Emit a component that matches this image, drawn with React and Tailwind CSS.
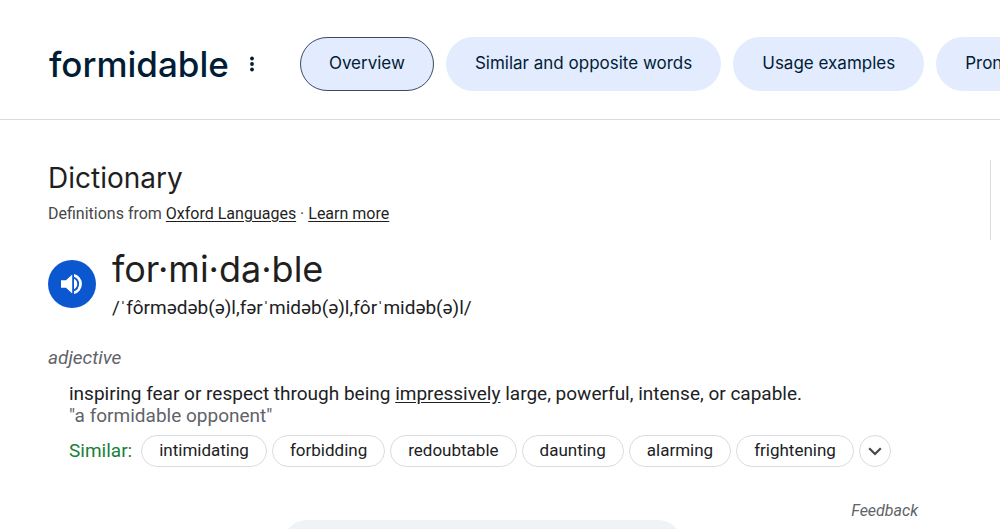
import React from "react";

const tabs = ["Overview", "Similar and opposite words", "Usage examples", "Pronunciation"];
const synonyms = ["intimidating", "forbidding", "redoubtable", "daunting", "alarming", "frightening"];

function MoreIcon() {
  return (
    <svg width="6" height="16" viewBox="0 0 6 16" fill="currentColor" aria-hidden="true">
      <circle cx="3" cy="2.5" r="1.9" />
      <circle cx="3" cy="8" r="1.9" />
      <circle cx="3" cy="13.5" r="1.9" />
    </svg>
  );
}

function SpeakerIcon() {
  return (
    <svg width="24" height="24" viewBox="0 0 24 24" fill="currentColor" aria-hidden="true">
      <path d="M1 8.2V15.8H6L12.2 21.5V2.5L6 8.2Z" />
      <path d="M14 6.8a5.8 5.8 0 0 1 0 10.4Z" />
      <path d="M14 1.9v2.8a7.8 7.8 0 0 1 0 14.6v2.8a10.4 10.4 0 0 0 0-20.2Z" />
    </svg>
  );
}

function ChevronIcon() {
  return (
    <svg width="14" height="9" viewBox="0 0 14 9" fill="none" stroke="currentColor" strokeWidth="2.2" aria-hidden="true">
      <path d="M1.2 1.2 7 7l5.8-5.8" />
    </svg>
  );
}

function Header() {
  return (
    <header className="flex items-center overflow-hidden border-b border-[#dadce0] pt-[37px] pb-7 pl-[49px] font-['Inter',sans-serif] text-[#001d35]">
      <h1 className="shrink-0 text-[35px] leading-10 font-medium">formidable</h1>
      <button type="button" aria-label="More options" className="mr-[45px] ml-5 shrink-0">
        <MoreIcon />
      </button>
      <nav aria-label="Dictionary sections" className="flex gap-3">
        {tabs.map((tab, i) => (
          <button
            key={tab}
            type="button"
            aria-current={i === 0 ? "page" : undefined}
            className={
              "h-[54px] shrink-0 rounded-full border bg-[#e3ebff] px-7 text-[17px] whitespace-nowrap " +
              (i === 0 ? "border-[#3c4a63]" : "border-transparent")
            }
          >
            {tab}
          </button>
        ))}
      </nav>
    </header>
  );
}

function Pronunciation() {
  return (
    <div className="mt-[18px] flex items-center gap-4">
      <button
        type="button"
        aria-label="Listen"
        className="mt-0.5 flex size-12 shrink-0 items-center justify-center rounded-full bg-[#0b57d0] text-white"
      >
        <SpeakerIcon />
      </button>
      <div>
        <h3 className="font-['Inter',sans-serif] text-4xl leading-[50px] text-[#1f1f1f]">for·mi·da·ble</h3>
        <p className="text-[19px] leading-7">/ˈfôrmədəb(ə)l,fərˈmidəb(ə)l,fôrˈmidəb(ə)l/</p>
      </div>
    </div>
  );
}

function Definition() {
  return (
    <div className="mt-[11px] pl-[21px]">
      <p className="text-[19px] leading-[22px]">
        inspiring fear or respect through being{" "}
        <a href="#impressively" className="underline underline-offset-2">impressively</a> large, powerful, intense, or capable.
      </p>
      <p className="text-[19px] leading-[22px] text-[#5f6368]">"a formidable opponent"</p>
      <div className="mt-2 flex items-center">
        <span className="mr-[9px] text-[19px] leading-7 text-[#188038]">Similar:</span>
        <ul className="flex gap-[5px]">
          {synonyms.map((word) => (
            <li key={word}>
              <button type="button" className="h-8 rounded-full border border-[#dadce0] px-[17px] text-[17px] whitespace-nowrap">
                {word}
              </button>
            </li>
          ))}
          <li>
            <button
              type="button"
              aria-label="More synonyms"
              className="flex size-8 items-center justify-center rounded-full border border-[#dadce0] text-[#474747]"
            >
              <ChevronIcon />
            </button>
          </li>
        </ul>
      </div>
    </div>
  );
}

export default function App() {
  return (
    <div className="h-screen overflow-hidden bg-white font-['Roboto',sans-serif] text-[#202124]">
      <Header />
      <main className="flex justify-between pr-[9px] pl-12">
        <article className="w-[870px]">
          <h2 className="pt-10 font-['Inter',sans-serif] text-[28px] leading-9 text-[#1f1f1f]">Dictionary</h2>
          <p className="mt-[6px] text-base leading-6 text-[#474747]">
            Definitions from{" "}
            <a href="#oxford" className="text-[#1f1f1f] underline underline-offset-2">Oxford Languages</a> ·{" "}
            <a href="#learn" className="text-[#1f1f1f] underline underline-offset-2">Learn more</a>
          </p>
          <Pronunciation />
          <p className="mt-[22px] text-[19px] leading-7 text-[#5f6368] italic">adjective</p>
          <Definition />
          <div className="mt-[35px] flex justify-end">
            <a href="#feedback" className="text-base leading-[18px] text-[#5f6368] italic">Feedback</a>
          </div>
        </article>
        <div className="mt-10 h-20 border-l border-[#dadce0]" />
      </main>
      <div className="flex pl-[283px]">
        <button type="button" aria-label="Show more" className="h-12 w-[399px] rounded-full bg-[#f0f3f5]" />
      </div>
    </div>
  );
}
